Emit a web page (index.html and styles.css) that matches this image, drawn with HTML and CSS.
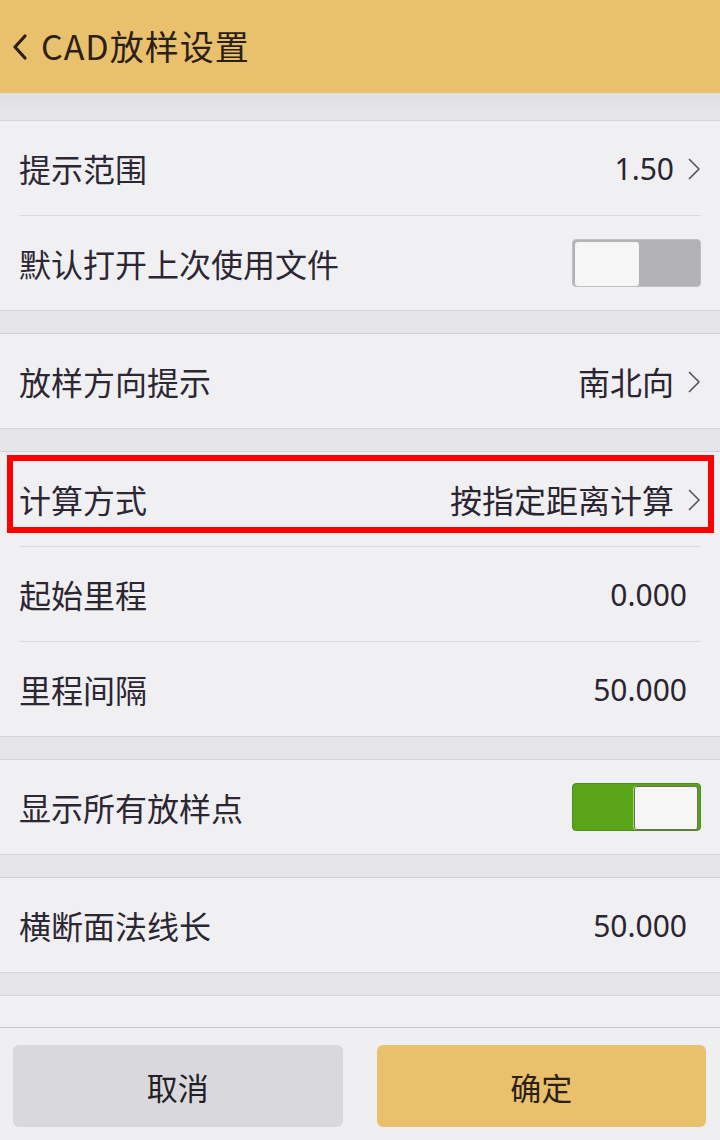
FILE: index.html
```html
<!DOCTYPE html>
<html lang="zh">
<head>
<meta charset="utf-8">
<title>CAD放样设置</title>
<link rel="stylesheet" href="styles.css">
</head>
<body>
<div class="app">
  <header class="topbar">
    <svg class="back" viewBox="0 0 16 26" width="16" height="26"><polyline points="13,2 3,13 13,24" fill="none" stroke="#2b2018" stroke-width="3.2" stroke-linecap="round" stroke-linejoin="round"/></svg>
    <span class="title">CAD放样设置</span>
  </header>
  <main class="list">
    <section class="group">
      <div class="row"><span class="label">提示范围</span><span class="value">1.50<svg class="chev" viewBox="0 0 14 24" width="14" height="24"><polyline points="2,2 12,12 2,22" fill="none" stroke="#555" stroke-width="1.6" stroke-linejoin="round"/></svg></span></div>
      <div class="row"><span class="label">默认打开上次使用文件</span><span class="toggle off"><span class="knob"></span></span></div>
    </section>
    <section class="group">
      <div class="row"><span class="label">放样方向提示</span><span class="value cjk">南北向<svg class="chev" viewBox="0 0 14 24" width="14" height="24"><polyline points="2,2 12,12 2,22" fill="none" stroke="#555" stroke-width="1.6" stroke-linejoin="round"/></svg></span></div>
    </section>
    <section class="group">
      <div class="row highlighted"><span class="label">计算方式</span><span class="value cjk">按指定距离计算<svg class="chev" viewBox="0 0 14 24" width="14" height="24"><polyline points="2,2 12,12 2,22" fill="none" stroke="#555" stroke-width="1.6" stroke-linejoin="round"/></svg></span><span class="redbox"></span></div>
      <div class="row"><span class="label">起始里程</span><span class="value plain">0.000</span></div>
      <div class="row"><span class="label">里程间隔</span><span class="value plain">50.000</span></div>
    </section>
    <section class="group">
      <div class="row"><span class="label">显示所有放样点</span><span class="toggle on"><span class="knob"></span></span></div>
    </section>
    <section class="group">
      <div class="row"><span class="label">横断面法线长</span><span class="value plain">50.000</span></div>
    </section>
    <section class="group">
      <div class="row"></div>
    </section>
  </main>
  <footer class="bottombar">
    <button class="btn cancel">取消</button>
    <button class="btn ok">确定</button>
  </footer>
</div>
</body>
</html>
```

FILE: styles.css
```css
* { box-sizing: border-box; }
html, body { margin: 0; padding: 0; }
body {
  font-family: "Noto Sans", "Noto Sans CJK SC", sans-serif;
  color: #2a2530;
  background: #e5e5e9;
}
.app {
  width: 720px;
  height: 1140px;
  display: flex;
  flex-direction: column;
  overflow: hidden;
}
.topbar {
  height: 93px;
  flex: none;
  background: #e9c06c;
  display: flex;
  align-items: center;
  padding-left: 12px;
  padding-bottom: 2px;
  color: #2b2018;
}
.back { margin-right: 13px; margin-top: 2px; }
.title {
  font-family: "Noto Sans CJK SC", sans-serif;
  font-size: 34px;
  letter-spacing: 1px;
}
.list {
  flex: 1;
  overflow: hidden;
  padding-top: 27px;
  display: flex;
  flex-direction: column;
  gap: 22px;
  background: linear-gradient(#dfdfe3, #e6e6ea 20px);
}
.group {
  background: #f0f0f3;
  border-top: 1px solid #d3d3d7;
  border-bottom: 1px solid #d3d3d7;
}
.row {
  position: relative;
  height: 94px;
  display: flex;
  align-items: center;
  justify-content: space-between;
  padding: 0 19px 0 19px;
  font-size: 30px;
}
.row + .row::before {
  content: "";
  position: absolute;
  top: -1px;
  left: 19px;
  right: 19px;
  height: 1px;
  background: #dcdce0;
}
.row + .row { margin-top: 1px; }
.label {
  font-family: "Noto Sans CJK SC", sans-serif;
  font-size: 32px;
  color: #2c2732;
}
.value {
  display: flex;
  align-items: center;
  gap: 13px;
  font-family: "Noto Sans", "Noto Sans CJK SC", sans-serif;
}
.value.cjk {
  font-family: "Noto Sans CJK SC", sans-serif;
  font-size: 32px;
}
.value.plain { margin-right: 14px; }
.chev { margin-top: 2px; }
.toggle {
  width: 129px;
  height: 48px;
  border-radius: 4px;
  display: flex;
  padding: 2px;
}
.toggle .knob {
  width: 64px;
  height: 44px;
  background: #f6f6f7;
  border-radius: 3px;
}
.toggle.off {
  background: #b3b3b6;
  border: 1px solid #c0c0c3;
  justify-content: flex-start;
}
.toggle.on {
  background: #5aa419;
  border: 1px solid #4e8a1a;
  justify-content: flex-end;
}
.toggle.on .knob {
  border: 1px solid #6c6c64;
  box-shadow: -1px 0 0 #9be04a;
}
.redbox {
  position: absolute;
  left: 7px;
  right: 6px;
  top: 3px;
  bottom: 13px;
  border: 6px solid #ff0000;
  pointer-events: none;
}
.bottombar {
  flex: none;
  height: 113px;
  background: #efeff1;
  border-top: 1px solid #c6c6ca;
  display: flex;
  gap: 34px;
  padding: 17px 14px 13px 13px;
}
.btn {
  flex: 1;
  border: none;
  border-radius: 6px;
  font-family: "Noto Sans CJK SC", sans-serif;
  font-size: 31px;
  color: #231f26;
}
.btn.cancel { background: #d9d9dd; }
.btn.ok { background: #e9c06c; color: #2b2018; }
```
